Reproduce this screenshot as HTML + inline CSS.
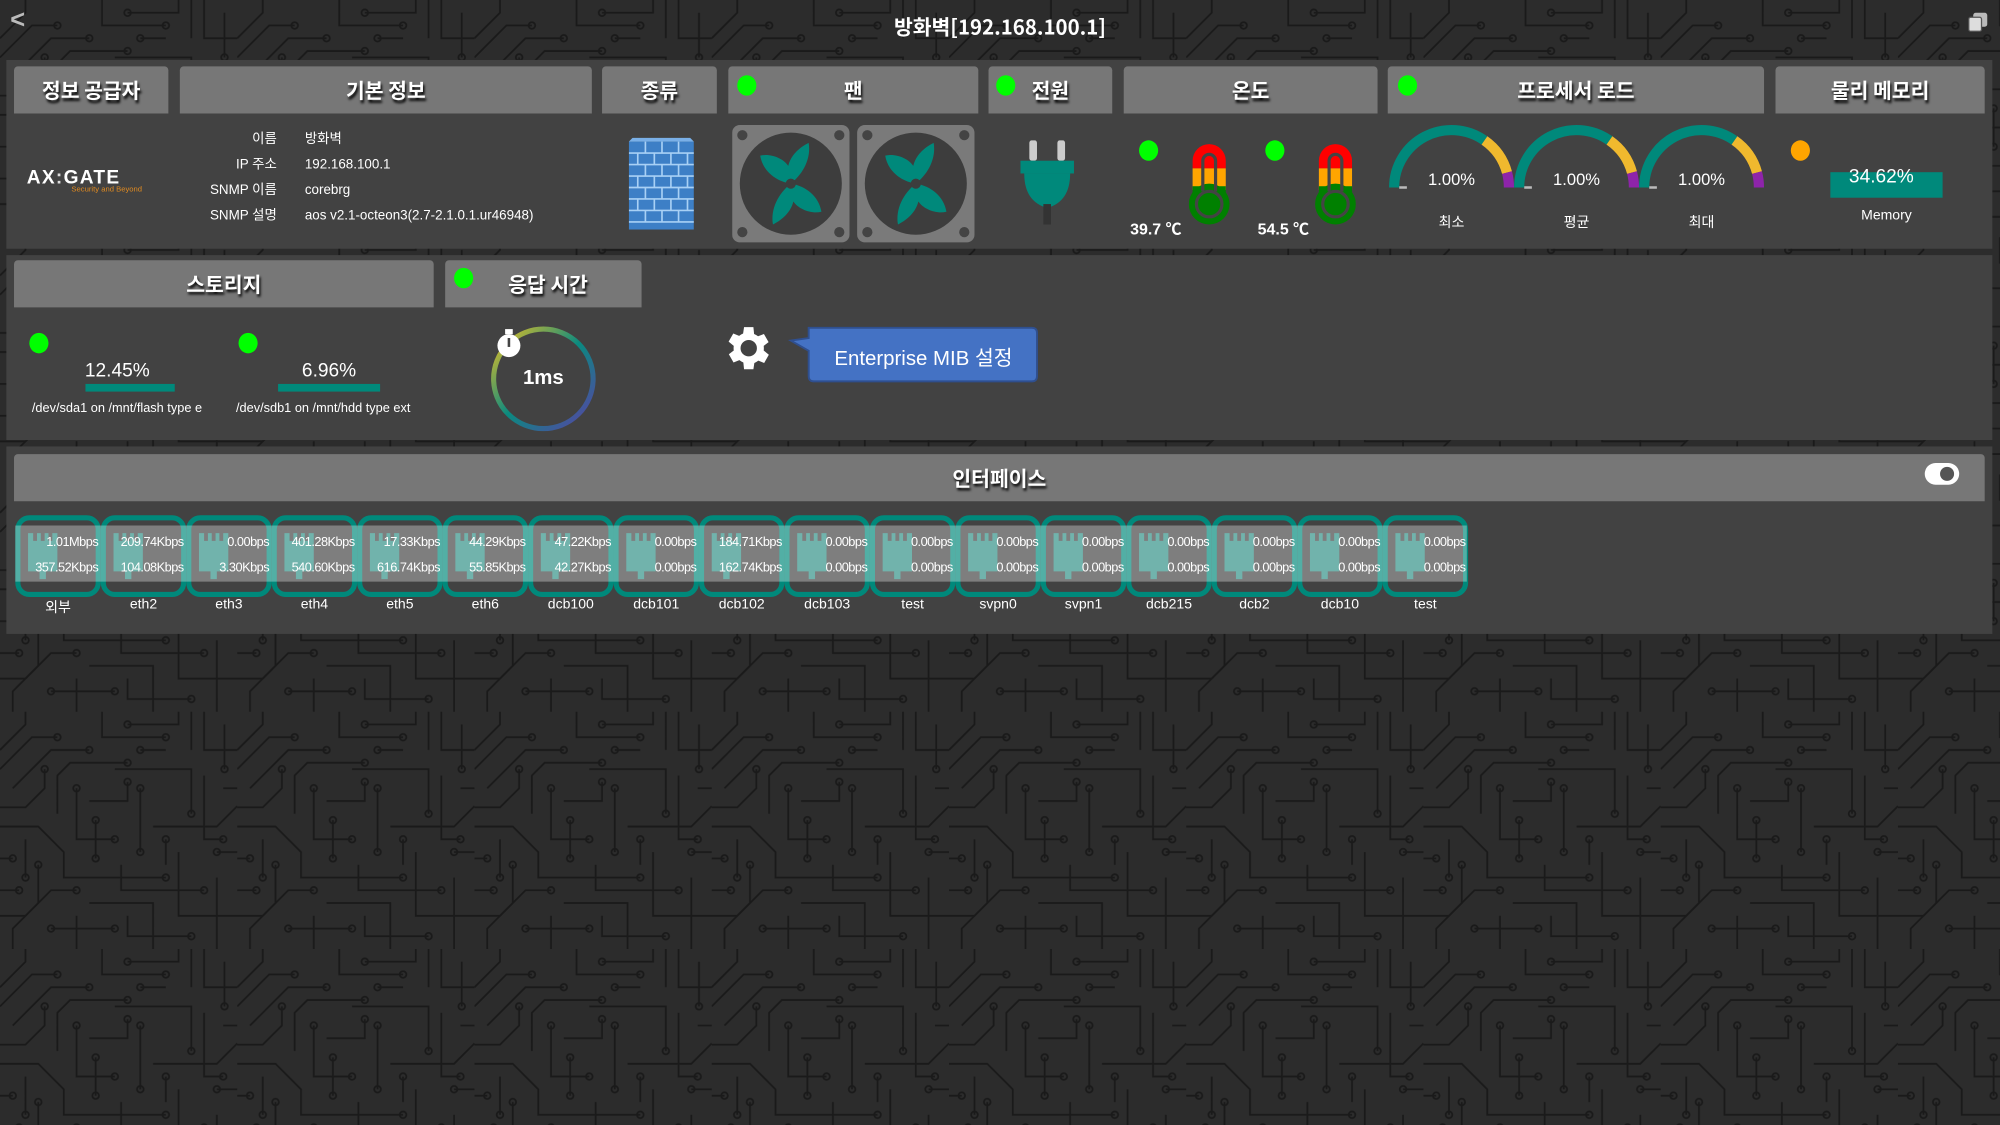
<!DOCTYPE html>
<html><head><meta charset="utf-8">
<style>
*{box-sizing:border-box;margin:0;padding:0}
html,body{width:2000px;height:1125px;overflow:hidden;background:#2c2c2c}
#w{position:absolute;left:0;top:0;width:1568px;height:882px;transform:scale(1.27551);transform-origin:0 0;font-family:"Liberation Sans","Noto Sans CJK KR",sans-serif;color:#fff}
.abs{position:absolute}
.panel{position:absolute;left:5px;width:1557px;background:#424242}
.hd{position:absolute;height:37px;background:#777;border-radius:3px 3px 0 0;font-family:"Noto Sans CJK KR","Liberation Sans",sans-serif;font-weight:bold;font-size:16px;line-height:37px;text-align:center;text-shadow:1px 2px 2px #000}
.dot{position:absolute;width:15px;height:16px;border-radius:50%;background:#0f0}
.sm{font-family:"Liberation Sans","Noto Sans CJK KR",sans-serif;font-size:11px;position:absolute;white-space:nowrap}
.tile{position:absolute;top:404px;width:67px;height:64px;border:4px solid #00897b;border-radius:11px;background:#424242}
.tv{position:absolute;right:2px;font-size:10px;white-space:nowrap;letter-spacing:-0.4px}
.tl{position:absolute;top:468px;width:67px;text-align:center;font-size:11px}
</style></head><body>
<div id="w">
<svg class="abs" style="left:0;top:0" width="1568" height="882">
<defs><pattern id="p" width="186" height="186" patternUnits="userSpaceOnUse">
<g fill="none" stroke="#1a1a1a" stroke-width="1.4">
<path d="M0 30 L20 10 L20 0 M10 60 L40 30 L70 30 M0 90 L30 90 L50 110 L50 130 L130 130 M30 120 L30 150 L10 170 L10 186 M60 60 L60 100 L90 100 M80 0 L80 20 L130 20 M90 45 L150 45 L150 80 M110 60 L110 110 M120 90 L170 90 L186 74 M140 110 L140 160 L186 160 M70 150 L120 150 L120 186 M40 170 L90 170 M160 0 L160 30 L186 30 M170 110 L186 110 M0 140 L15 140"/>
<path d="M0 45 L25 20 L45 20 M0 75 L20 75 L35 60 L35 45 M45 80 L45 50 L55 40 L100 40 M70 70 L100 70 L100 55 M75 85 L75 115 M95 120 L95 140 L160 140 M20 100 L20 130 M0 160 L20 160 L40 140 L60 140 M60 160 L60 186 M100 160 L100 176 L150 176 M130 100 L130 120 M160 50 L160 100 L175 100 M175 60 L186 60 M170 130 L170 186 M140 0 L140 10 L100 10 M110 30 L130 30 M0 115 L10 115 M150 0 L150 30 M176 10 L176 45"/>
<circle cx="70" cy="30" r="2.6"/><circle cx="90" cy="100" r="2.6"/><circle cx="130" cy="20" r="2.6"/><circle cx="150" cy="80" r="2.6"/><circle cx="110" cy="60" r="2.6"/><circle cx="110" cy="110" r="2.6"/><circle cx="130" cy="130" r="2.6"/><circle cx="90" cy="170" r="2.6"/><circle cx="40" cy="170" r="2.6"/><circle cx="60" cy="60" r="2.6"/><circle cx="15" cy="140" r="2.6"/><circle cx="170" cy="110" r="2.6"/><circle cx="30" cy="120" r="2.6"/>
<circle cx="45" cy="20" r="2.6"/><circle cx="35" cy="45" r="2.6"/><circle cx="100" cy="40" r="2.6"/><circle cx="100" cy="55" r="2.6"/><circle cx="75" cy="115" r="2.6"/><circle cx="75" cy="85" r="2.6"/><circle cx="20" cy="130" r="2.6"/><circle cx="60" cy="140" r="2.6"/><circle cx="150" cy="176" r="2.6"/><circle cx="130" cy="100" r="2.6"/><circle cx="175" cy="100" r="2.6"/><circle cx="110" cy="30" r="2.6"/><circle cx="100" cy="10" r="2.6"/><circle cx="10" cy="115" r="2.6"/><circle cx="160" cy="140" r="2.6"/><circle cx="176" cy="45" r="2.6"/></g></pattern></defs>
<rect width="1568" height="882" fill="url(#p)"/>
</svg>
<div class="abs" style="left:8px;top:5px;font-size:20px;font-weight:bold;color:#bbb">&lt;</div>
<div class="abs" style="left:0;width:1568px;top:8px;text-align:center;font-family:'Noto Sans CJK KR',sans-serif;font-weight:bold;font-size:16px">방화벽[192.168.100.1]</div>
<div class="abs" style="left:1547px;top:10px;width:11px;height:11px;background:#bbb;border-radius:2px"></div>
<div class="abs" style="left:1543px;top:13px;width:11px;height:12px;background:#ddd;border-radius:2px;border:1px solid #555"></div>

<div class="panel" style="top:47px;height:148px"></div>
<div class="hd" style="left:11px;width:121px;top:52px">정보 공급자</div>
<div class="hd" style="left:141px;width:323px;top:52px">기본 정보</div>
<div class="hd" style="left:472px;width:90px;top:52px">종류</div>
<div class="hd" style="left:571px;width:196px;top:52px">팬</div>
<div class="hd" style="left:775px;width:97px;top:52px">전원</div>
<div class="hd" style="left:881px;width:199px;top:52px">온도</div>
<div class="hd" style="left:1088px;width:295px;top:52px">프로세서 로드</div>
<div class="hd" style="left:1392px;width:164px;top:52px">물리 메모리</div>
<div class="dot" style="left:578px;top:59px"></div>
<div class="dot" style="left:781px;top:59px"></div>
<div class="dot" style="left:1096px;top:59px"></div>

<div class="abs" style="left:21px;top:131px;font-size:15px;font-weight:bold;letter-spacing:1px;color:#fff;font-family:'Liberation Sans',sans-serif">AX<span style="color:#ddd">:</span>GATE</div>
<div class="abs" style="left:56px;top:146px;font-size:6px;color:#e08a20">Security and Beyond</div>
<div class="sm" style="left:140px;width:77px;text-align:right;top:99px;line-height:20px;font-size:10.5px">이름<br>IP 주소<br>SNMP 이름<br>SNMP 설명</div>
<div class="sm" style="left:239px;top:99px;line-height:20px;font-size:10.5px">방화벽<br>192.168.100.1<br>corebrg<br>aos v2.1-octeon3(2.7-2.1.0.1.ur46948)</div>

<svg class="abs" style="left:493px;top:108px" width="51" height="72"><rect x="0" y="3" width="51" height="69" fill="#3d7fc6"/><path d="M0 3 L3 0 L48 0 L51 3Z" fill="#7ab0e8"/><g stroke="#a8d0f5" stroke-width="1.3"><path d="M0 12H51M0 21H51M0 30H51M0 39H51M0 48H51M0 57H51M0 66H51"/><path d="M13 3V12M26 3V12M39 3V12M7 12V21M20 12V21M33 12V21M46 12V21M13 21V30M26 21V30M39 21V30M7 30V39M20 30V39M33 30V39M46 30V39M13 39V48M26 39V48M39 39V48M7 48V57M20 48V57M33 48V57M46 48V57M13 57V66M26 57V66M39 57V66"/></g></svg>

<svg class="abs" style="left:574px;top:98px" width="192" height="93">
<g id="fan"><rect x="0" y="0" width="92" height="92" rx="6" fill="#7a7a7a"/><circle cx="46" cy="46" r="40" fill="#3d3d3d"/><g fill="#444"><circle cx="8" cy="8" r="4"/><circle cx="84" cy="8" r="4"/><circle cx="8" cy="84" r="4"/><circle cx="84" cy="84" r="4"/></g>
<g fill="#00897b"><path id="bl" d="M46 46 C34 44 24 36 22 24 C30 22 40 26 44 32 C46 24 52 18 60 14 C62 26 56 38 46 46Z"/><use href="#bl" transform="rotate(180 46 46)"/></g><circle cx="46" cy="46" r="4" fill="#3d3d3d"/></g>
<use href="#fan" x="98"/></svg>

<svg class="abs" style="left:800px;top:110px" width="50" height="68"><rect x="7" y="0" width="6" height="16" rx="2" fill="#ccc"/><rect x="29" y="0" width="6" height="16" rx="2" fill="#ccc"/><rect x="0" y="16" width="42" height="10" fill="#00897b"/><path d="M3 26 H39 Q39 48 21 53 Q3 48 3 26Z" fill="#00897b"/><rect x="18" y="50" width="6" height="16" fill="#333"/></svg>

<div class="dot" style="left:893px;top:110px"></div>
<div class="dot" style="left:992px;top:110px"></div>
<svg class="abs" style="left:932px;top:110px" width="32" height="68"><path d="M3 16 A13 13 0 0 1 29 16 V22 H3Z" fill="#f00"/><rect x="3" y="22" width="26" height="17" fill="#ffa500"/><circle cx="16" cy="50" r="16" fill="#008000"/><rect x="3" y="36" width="26" height="6" fill="#008000"/><path d="M11 40 V16 A5 5 0 0 1 21 16 V40" fill="none" stroke="#444" stroke-width="2.5"/><circle cx="16" cy="50" r="10" fill="#008000" stroke="#444" stroke-width="2.5"/></svg>
<svg class="abs" style="left:1031px;top:110px" width="32" height="68"><path d="M3 16 A13 13 0 0 1 29 16 V22 H3Z" fill="#f00"/><rect x="3" y="22" width="26" height="17" fill="#ffa500"/><circle cx="16" cy="50" r="16" fill="#008000"/><rect x="3" y="36" width="26" height="6" fill="#008000"/><path d="M11 40 V16 A5 5 0 0 1 21 16 V40" fill="none" stroke="#444" stroke-width="2.5"/><circle cx="16" cy="50" r="10" fill="#008000" stroke="#444" stroke-width="2.5"/></svg>
<div class="sm" style="left:886px;top:169px;font-size:12.5px;font-weight:bold">39.7 ℃</div>
<div class="sm" style="left:986px;top:169px;font-size:12.5px;font-weight:bold">54.5 ℃</div>

<svg class="abs" style="left:1085px;top:95px" width="305" height="60">
<g id="g1" fill="none" stroke-width="8"><path d="M8 52 A45 45 0 0 1 78.8 15.1" stroke="#00897b"/><path d="M78.8 15.1 A45 45 0 0 1 96.5 40.3" stroke="#f0b92e"/><path d="M96.5 40.3 A45 45 0 0 1 98 52" stroke="#8e24aa"/><path d="M12 52 H18" stroke="#bbb" stroke-width="2"/></g>
<use href="#g1" x="98"/><use href="#g1" x="196"/></svg>
<div class="sm" style="left:1108px;width:60px;text-align:center;top:133px;font-size:13px">1.00%</div>
<div class="sm" style="left:1206px;width:60px;text-align:center;top:133px;font-size:13px">1.00%</div>
<div class="sm" style="left:1304px;width:60px;text-align:center;top:133px;font-size:13px">1.00%</div>
<div class="sm" style="left:1108px;width:60px;text-align:center;top:166px">최소</div>
<div class="sm" style="left:1206px;width:60px;text-align:center;top:166px">평균</div>
<div class="sm" style="left:1304px;width:60px;text-align:center;top:166px">최대</div>
<div class="dot" style="left:1404px;top:110px;background:#ffa500"></div>
<div class="abs" style="left:1435px;top:135px;width:88px;height:20px;background:#00897b"></div>
<div class="sm" style="left:1435px;width:80px;text-align:center;top:130px;font-size:15px">34.62%</div>
<div class="sm" style="left:1439px;width:80px;text-align:center;top:163px">Memory</div>

<div class="panel" style="top:200px;height:145px"></div>
<div class="hd" style="left:11px;width:329px;top:204px">스토리지</div>
<div class="hd" style="left:349px;width:154px;top:204px">&nbsp;&nbsp;응답 시간</div>
<div class="dot" style="left:356px;top:210px"></div>
<div class="dot" style="left:23px;top:261px"></div>
<div class="dot" style="left:187px;top:261px"></div>
<div class="sm" style="left:52px;width:80px;text-align:center;top:282px;font-size:15px">12.45%</div>
<div class="sm" style="left:218px;width:80px;text-align:center;top:282px;font-size:15px">6.96%</div>
<div class="abs" style="left:67px;top:301px;width:70px;height:6px;background:#00897b"></div>
<div class="abs" style="left:218px;top:301px;width:80px;height:6px;background:#00897b"></div>
<div class="sm" style="left:25px;top:315px;font-size:10px">/dev/sda1 on /mnt/flash type e</div>
<div class="sm" style="left:185px;top:315px;font-size:10px">/dev/sdb1 on /mnt/hdd type ext</div>

<svg class="abs" style="left:380px;top:252px" width="92" height="92"><defs><linearGradient id="rg" x1="0" y1="0" x2="1" y2="1"><stop offset="0" stop-color="#f0c020"/><stop offset="0.5" stop-color="#0a8a80"/><stop offset="1" stop-color="#5b3fa8"/></linearGradient></defs><circle cx="46" cy="45" r="39" fill="none" stroke="url(#rg)" stroke-width="4"/><circle cx="19" cy="19" r="9" fill="#fff"/><rect x="16" y="6" width="6" height="4" fill="#fff"/><rect x="18" y="13" width="2" height="7" fill="#444"/></svg>
<div class="sm" style="left:396px;width:60px;text-align:center;top:288px;font-size:16px;font-weight:bold">1ms</div>

<svg class="abs" style="left:565px;top:251px" width="44" height="44" viewBox="0 0 24 24"><path fill="#fff" d="M19.4 13a7.5 7.5 0 0 0 0-2l2.1-1.6-2-3.5-2.5 1a7.6 7.6 0 0 0-1.7-1L15 3h-4l-.4 2.7a7.6 7.6 0 0 0-1.7 1l-2.5-1-2 3.5L6.6 11a7.5 7.5 0 0 0 0 2l-2.1 1.6 2 3.5 2.5-1a7.6 7.6 0 0 0 1.7 1L11 21h4l.4-2.7a7.6 7.6 0 0 0 1.7-1l2.5 1 2-3.5zM13 15.5a3.5 3.5 0 1 1 0-7 3.5 3.5 0 0 1 0 7z" transform="translate(-1 0)"/></svg>
<svg class="abs" style="left:617px;top:255px" width="200" height="46"><path d="M17 2 H192 Q196 2 196 6 V40 Q196 44 192 44 H21 Q17 44 17 40 V20 L3 12 L17 10Z" fill="#4472c4" stroke="#2f4f8f" stroke-width="1.5"/></svg>
<div class="sm" style="left:634px;width:180px;text-align:center;top:267px;font-size:16px">Enterprise MIB 설정</div>

<div class="panel" style="top:350px;height:147px"></div>
<div class="hd" style="left:11px;width:1545px;top:356px">인터페이스</div>
<div class="abs" style="left:1509px;top:363px;width:27px;height:17px;border-radius:9px;background:#fff"></div>
<div class="abs" style="left:1521px;top:366px;width:11px;height:11px;border-radius:50%;background:#555"></div>

<div id="tiles"></div>
<div class="abs" style="left:12px;top:412px;width:1138px;height:44px;background:rgba(255,255,255,0.32)"></div>
<div id="tx"></div>
</div>
<script>
var d=[["1.01Mbps","357.52Kbps","외부"],["209.74Kbps","104.08Kbps","eth2"],["0.00bps","3.30Kbps","eth3"],["401.28Kbps","540.60Kbps","eth4"],["17.33Kbps","616.74Kbps","eth5"],["44.29Kbps","55.85Kbps","eth6"],["47.22Kbps","42.27Kbps","dcb100"],["0.00bps","0.00bps","dcb101"],["184.71Kbps","162.74Kbps","dcb102"],["0.00bps","0.00bps","dcb103"],["0.00bps","0.00bps","test"],["0.00bps","0.00bps","svpn0"],["0.00bps","0.00bps","svpn1"],["0.00bps","0.00bps","dcb215"],["0.00bps","0.00bps","dcb2"],["0.00bps","0.00bps","dcb10"],["0.00bps","0.00bps","test"]];
var t="",x="";
for(var i=0;i<d.length;i++){var l=12+i*67;
t+='<div class="tile" style="left:'+l+'px"><svg class="abs" style="left:2px;top:8px" width="40" height="40"><path d="M4 2H8V8H11V2H14V8H17V2H20V8H23V2H27V32H18V38H13V32H4Z" fill="#2f8f85"/></svg></div>';
x+='<div class="tv" style="left:'+l+'px;width:65px;text-align:right;top:420px">'+d[i][0]+'</div><div class="tv" style="left:'+l+'px;width:65px;text-align:right;top:440px">'+d[i][1]+'</div><div class="tl" style="left:'+l+'px">'+d[i][2]+'</div>';}
document.getElementById("tiles").outerHTML=t;document.getElementById("tx").outerHTML=x;
</script>
</body></html>
